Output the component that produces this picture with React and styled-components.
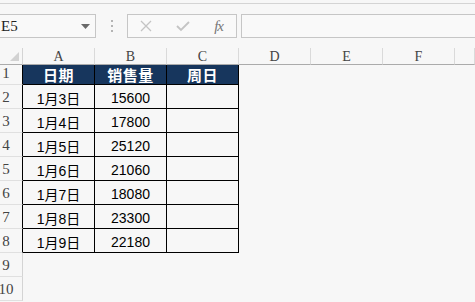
import React from 'react';
import styled, { createGlobalStyle } from 'styled-components';

const GlobalStyle = createGlobalStyle`
  * { box-sizing: border-box; }
  html, body {
    margin: 0;
    padding: 0;
    background: #f7f7f7;
    overflow: hidden;
  }
`;

const Page = styled.div`
  width: 475px;
  height: 302px;
  background: #f7f7f7;
  display: flex;
  flex-direction: column;
  overflow: hidden;
  font-family: "Liberation Sans", "Noto Sans CJK SC", sans-serif;
`;

const TopEdge = styled.div`
  height: 4px;
  flex-shrink: 0;
  border-bottom: 1px solid #d4d4d4;
`;

const FormulaRow = styled.div`
  display: flex;
  align-items: center;
  height: 24px;
  margin-top: 10px;
  flex-shrink: 0;
`;

const NameBox = styled.div`
  width: 96px;
  height: 24px;
  border: 1px solid #c6c6c6;
  border-left: none;
  background: #f9f9f9;
  display: flex;
  align-items: center;
  justify-content: space-between;
  padding: 0 5px 0 1px;
  font-family: "Liberation Serif", serif;
  font-size: 15px;
  color: #222;
`;

const Grip = styled.div`
  width: 31px;
  display: flex;
  flex-direction: column;
  align-items: center;
  gap: 3px;
  padding-left: 1px;

  span {
    width: 2px;
    height: 2px;
    background: #b4b4b4;
  }
`;

const ToolBox = styled.div`
  width: 110px;
  height: 24px;
  border: 1px solid #c6c6c6;
  background: #f9f9f9;
  display: flex;
  align-items: center;
  justify-content: space-between;
  padding: 0 13px 0 12px;
`;

const FxLabel = styled.span`
  font-family: "Liberation Serif", serif;
  font-style: italic;
  font-size: 15px;
  color: #777;
  letter-spacing: -1px;
`;

const FormulaInput = styled.div`
  flex: 1;
  height: 24px;
  margin-left: 4px;
  border: 1px solid #c6c6c6;
  border-right: none;
  background: #f9f9f9;
`;

const Sheet = styled.div`
  margin-top: 10px;
  display: grid;
  grid-template-columns: 23px repeat(6, 72px) 1fr;
  grid-template-rows: 17px 20px repeat(9, 24px);
`;

const Corner = styled.div`
  border-right: 1px solid #d4d4d4;
  border-bottom: 1px solid #ababab;
  position: relative;

  &:after {
    content: '';
    position: absolute;
    right: 3px;
    bottom: 3px;
    border-style: solid;
    border-width: 0 0 9px 9px;
    border-color: transparent transparent #d2d2d2 transparent;
  }
`;

const ColHead = styled.div`
  border-right: 1px solid #dadada;
  border-bottom: 1px solid #ababab;
  display: flex;
  align-items: center;
  justify-content: center;
  font-family: "Liberation Serif", serif;
  font-size: 14px;
  color: #444;
  padding-top: 1px;
`;

const RowHead = styled.div`
  border-right: 1px solid ${(p) => (p.$inTable ? '#000' : '#d4d4d4')};
  border-bottom: 1px solid #e0e0e0;
  display: flex;
  align-items: flex-end;
  justify-content: center;
  padding: 0 10px 2px 0;
  font-family: "Liberation Serif", serif;
  font-size: 15px;
  color: #444;
`;

const Cell = styled.div`
  display: flex;
  align-items: center;
  justify-content: center;
  font-size: 14px;
  color: #000;
  padding-top: 2px;
  ${(p) =>
    p.$bordered &&
    `
    border-right: 1px solid #000;
    border-bottom: 1px solid #000;
  `}
`;

const HeadCell = styled(Cell)`
  background: #17365d;
  color: #fff;
  font-family: "Noto Sans CJK SC", sans-serif;
  font-weight: bold;
  font-size: 15px;
  padding-top: 0;
  letter-spacing: 0.5px;
`;

const CrossIcon = () => (
  <svg width="12" height="12" viewBox="0 0 12 12">
    <path d="M1 1 L11 11 M11 1 L1 11" stroke="#c4c4c4" strokeWidth="1.3" fill="none" />
  </svg>
);

const CheckIcon = () => (
  <svg width="14" height="12" viewBox="0 0 14 12">
    <path d="M1 6 L5 10 L13 2" stroke="#c4c4c4" strokeWidth="1.8" fill="none" />
  </svg>
);

const DropArrow = () => (
  <svg width="9" height="5" viewBox="0 0 9 5">
    <path d="M0 0 H9 L4.5 5 Z" fill="#6a6a6a" />
  </svg>
);

const columns = ['A', 'B', 'C', 'D', 'E', 'F', ''];

const sales = [
  ['1月3日', '15600'],
  ['1月4日', '17800'],
  ['1月5日', '25120'],
  ['1月6日', '21060'],
  ['1月7日', '18080'],
  ['1月8日', '23300'],
  ['1月9日', '22180'],
];

const App = () => {
  const emptyTail = (key) =>
    [3, 4, 5, 6].map((c) => <Cell key={`${key}-${c}`} />);

  return (
    <>
      <GlobalStyle />
      <Page>
        <TopEdge />
        <FormulaRow>
          <NameBox>
            <span>E5</span>
            <DropArrow />
          </NameBox>
          <Grip>
            <span />
            <span />
            <span />
          </Grip>
          <ToolBox>
            <CrossIcon />
            <CheckIcon />
            <FxLabel>fx</FxLabel>
          </ToolBox>
          <FormulaInput />
        </FormulaRow>

        <Sheet>
          <Corner />
          {columns.map((c, i) => (
            <ColHead key={i}>{c}</ColHead>
          ))}

          <RowHead $inTable>1</RowHead>
          <HeadCell $bordered>日期</HeadCell>
          <HeadCell $bordered>销售量</HeadCell>
          <HeadCell $bordered>周日</HeadCell>
          {emptyTail('h')}

          {sales.map(([day, amount], i) => (
            <React.Fragment key={day}>
              <RowHead $inTable>{i + 2}</RowHead>
              <Cell $bordered>{day}</Cell>
              <Cell $bordered>{amount}</Cell>
              <Cell $bordered />
              {emptyTail(day)}
            </React.Fragment>
          ))}

          {[9, 10].map((n) => (
            <React.Fragment key={n}>
              <RowHead>{n}</RowHead>
              {[0, 1, 2].map((c) => (
                <Cell key={c} />
              ))}
              {emptyTail(n)}
            </React.Fragment>
          ))}
        </Sheet>
      </Page>
    </>
  );
};

export default App;
